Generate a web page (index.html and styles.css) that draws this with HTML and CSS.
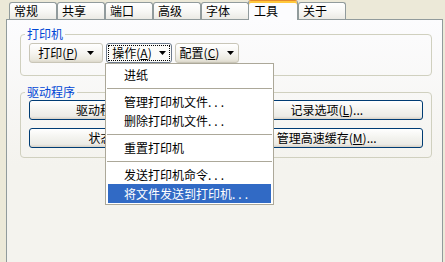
FILE: index.html
```html
<!DOCTYPE html>
<html lang="zh-CN">
<head>
<meta charset="utf-8">
<title>打印机属性 - 工具</title>
<link rel="stylesheet" href="styles.css">
</head>
<body>
<div class="window">
  <div class="tabs">
    <div class="tab">常规</div>
    <div class="tab">共享</div>
    <div class="tab">端口</div>
    <div class="tab">高级</div>
    <div class="tab">字体</div>
    <div class="tab tab-active">工具</div>
    <div class="tab">关于</div>
  </div>
  <div class="panel">
    <fieldset class="group group-printer">
      <legend>打印机</legend>
      <div class="btn-row">
        <button class="split w-print"><span>打印(<u>P</u>)</span><svg class="arrow" width="7" height="4" viewBox="0 0 7 4"><path d="M0 0H7L3.5 4Z"/></svg></button>
        <button class="split w-op focused"><span>操作(<u>A</u>)</span><svg class="arrow" width="7" height="4" viewBox="0 0 7 4"><path d="M0 0H7L3.5 4Z"/></svg></button>
        <button class="split w-cfg"><span>配置(<u>C</u>)</span><svg class="arrow" width="7" height="4" viewBox="0 0 7 4"><path d="M0 0H7L3.5 4Z"/></svg></button>
      </div>
    </fieldset>
    <fieldset class="group group-driver">
      <legend>驱动程序</legend>
      <div class="btn-grid">
        <button class="btn">驱动程序设置(<u>D</u>)...</button>
        <button class="btn">记录选项(<u>L</u>)...</button>
        <button class="btn">状态窗口(<u>S</u>)...</button>
        <button class="btn">管理高速缓存(<u>M</u>)...</button>
      </div>
    </fieldset>
  </div>
  <div class="menu">
    <div class="item">进纸</div>
    <div class="sep"></div>
    <div class="item">管理打印机文件<span class="dots">...</span></div>
    <div class="item">删除打印机文件<span class="dots">...</span></div>
    <div class="sep"></div>
    <div class="item">重置打印机</div>
    <div class="sep"></div>
    <div class="item">发送打印机命令<span class="dots">...</span></div>
    <div class="item item-hot">将文件发送到打印机<span class="dots">...</span></div>
  </div>
</div>
</body>
</html>
```
FILE: styles.css
```css
* {
  box-sizing: border-box;
}

html,
body {
  margin: 0;
  height: 100%;
  overflow: hidden;
}

body {
  background: #ece9d8;
  color: #000;
  font: 12px/16px "Noto Sans CJK SC", "Noto Sans", sans-serif;
}

.window {
  position: relative;
  padding: 0 2px 0 6px;
}

/* ---------- tabs ---------- */
.tabs {
  display: flex;
  align-items: flex-end;
  height: 19px;
  padding-left: 3px;
}

.tab {
  width: 48px;
  height: 17px;
  padding-left: 4px;
  line-height: 16px;
  border: 1px solid #919b9c;
  border-bottom: none;
  border-radius: 3px 3px 0 0;
  background: linear-gradient(#ffffff, #f7f7f4 55%, #ebeae4);
  white-space: nowrap;
}

.tab-active {
  position: relative;
  z-index: 1;
  width: 50px;
  height: 20px;
  margin-left: -1px;
  margin-bottom: -1px;
  padding-top: 2px;
  padding-left: 5px;
  border-top: 1px solid #e68b2c;
  box-shadow: inset 0 2px 0 #ffc83c;
  background: #fcfcfe;
}

/* ---------- page ---------- */
.panel {
  height: 243px;
  padding: 0 10px 0 13px;
  border: 1px solid #919b9c;
  border-bottom: none;
  background: linear-gradient(#fcfcfe, #f4f3ee 60%);
}

.group {
  margin: 0;
  min-width: 0;
  border: 1px solid #d0d0bf;
  border-radius: 4px;
}

.group legend {
  margin-left: -4px;
  padding: 0 2px;
  color: #0046d5;
  line-height: 16px;
}

.group-printer {
  margin-top: 6px;
  padding: 1px 8px 12px;
}

.group-driver {
  margin-top: 8px;
  padding: 0 8px 9px;
}

/* ---------- buttons ---------- */
button {
  font: inherit;
  color: #000;
  margin: 0;
}

.btn-row {
  display: flex;
  gap: 3px;
}

.split {
  position: relative;
  display: flex;
  align-items: center;
  justify-content: center;
  gap: 9px;
  height: 20px;
  padding: 0;
  line-height: 16px;
  border: 1px solid #c9c6b8;
  border-radius: 3px;
  background: linear-gradient(#ffffff, #f6f5f1 50%, #ebe9df 85%, #dcd8cb);
}

.w-print { width: 74px; }
.w-op { width: 66px; gap: 7px; }
.w-cfg { width: 64px; gap: 8px; }

.focused {
  border-color: #6d7a8c;
  background: #fbfbf9;
}

.focused::after {
  content: "";
  position: absolute;
  inset: 1px;
  border: 1px dotted #000;
}

.arrow {
  display: block;
  fill: #000;
}

.btn-grid {
  display: grid;
  grid-template-columns: 1fr 1fr;
  gap: 8px 9px;
}

.btn {
  height: 20px;
  padding: 0;
  line-height: 18px;
  border: 1px solid #003c74;
  border-radius: 3px;
  background: linear-gradient(#ffffff, #f4f4f0 45%, #ecebe6 85%, #d6d0c5);
  white-space: nowrap;
}

/* ---------- dropdown menu ---------- */
.menu {
  position: absolute;
  left: 105px;
  top: 63px;
  z-index: 5;
  width: 169px;
  padding: 1px 2px;
  border: 1px solid #aca899;
  background: #fff;
}

.item {
  height: 19px;
  padding-left: 16px;
  line-height: 19px;
  white-space: nowrap;
}

.item-hot {
  background: #316ac5;
  color: #fff;
}

.dots {
  letter-spacing: 3px;
}

.sep {
  display: flex;
  align-items: center;
  height: 8px;
  margin: 0 -1px;
}

.sep::before {
  content: "";
  flex: 1;
  height: 1px;
  background: #aca899;
}
```
